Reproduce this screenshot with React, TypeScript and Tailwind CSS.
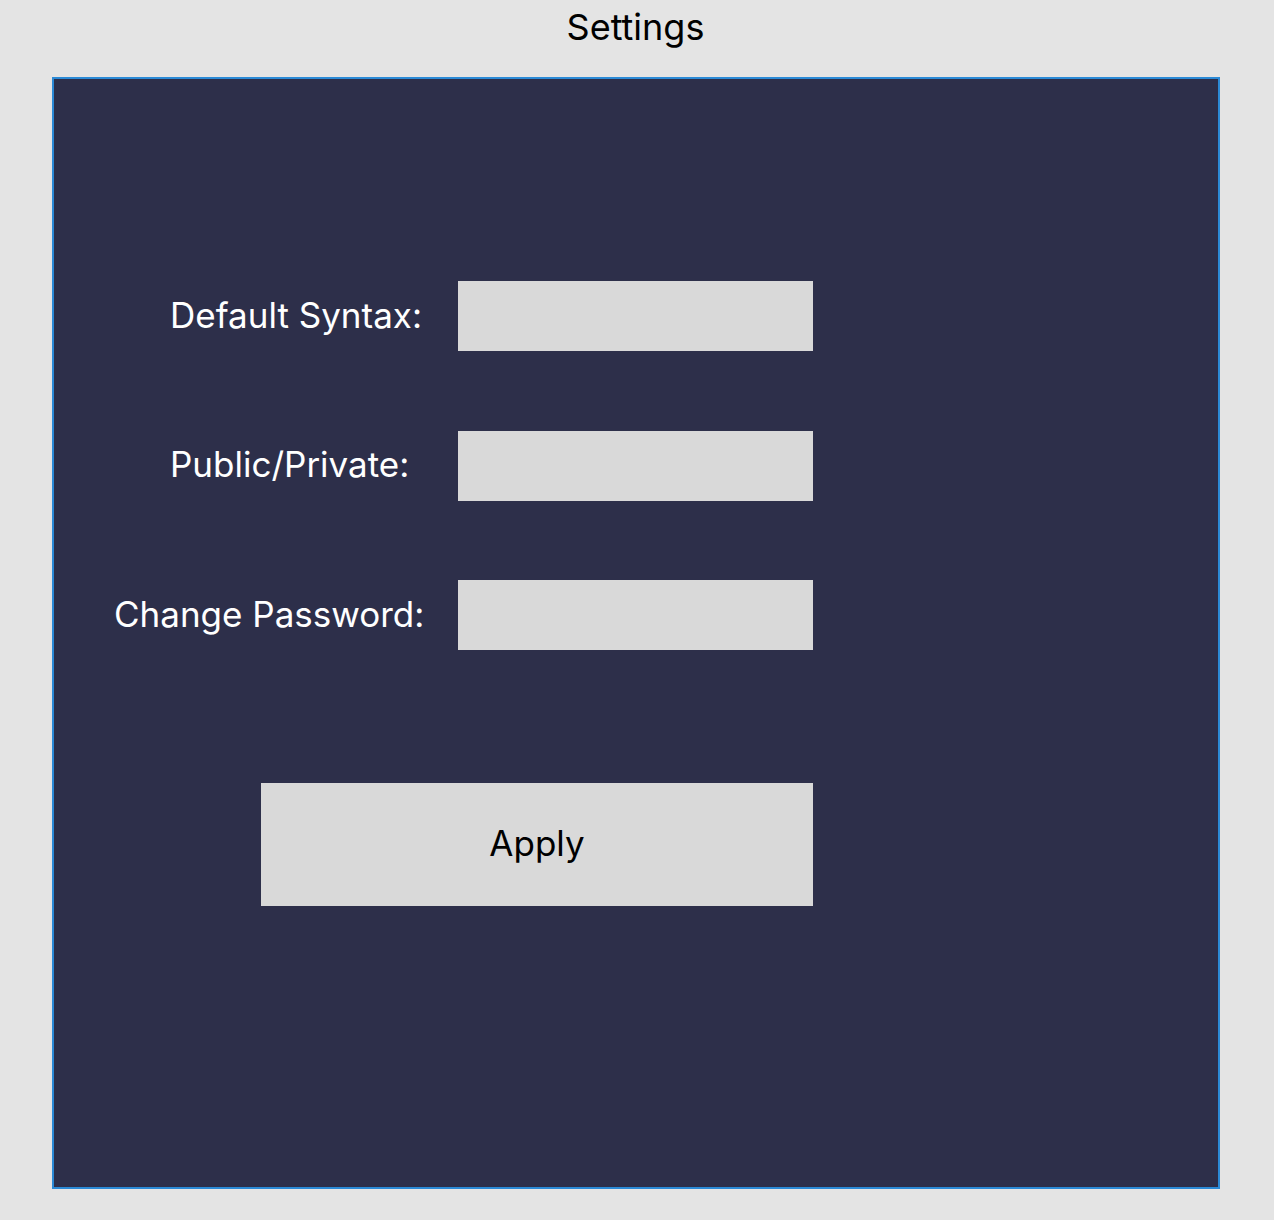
import { useState } from "react"

const FIELDS = [
  { id: "syntax", label: "Default Syntax:", indent: "pl-[116px]" },
  { id: "visibility", label: "Public/Private:", indent: "pl-[116px]" },
  { id: "password", label: "Change Password:", indent: "pl-[60px]" },
]

export default function App() {
  const [values, setValues] = useState<Record<string, string>>({})

  return (
    <div className="min-h-[1220px] bg-[#e4e4e4] font-['Inter',sans-serif]">
      <h1 className="h-[77px] pt-[4px] pr-[3px] text-center text-[36px] leading-[46px] text-black">Settings</h1>
      <main className="ml-[52px] w-[1168px] h-[1112px] border-2 border-[#2b8ad6] bg-[#2d2f4a] pt-[202px]">
        <div className="flex flex-col gap-[79.5px]">
          {FIELDS.map(field => (
            <div key={field.id} className="flex items-center h-[70px]">
              <label htmlFor={field.id} className={`w-[404px] pb-[2px] text-[35px] text-white ${field.indent}`}>
                {field.label}
              </label>
              <input
                id={field.id}
                type={field.id === "password" ? "password" : "text"}
                className="w-[355px] h-[70px] bg-[#d9d9d9] outline-none px-3 text-[24px] text-black"
                value={values[field.id] ?? ""}
                onChange={e => setValues({ ...values, [field.id]: e.target.value })}
              />
            </div>
          ))}
        </div>
        <button className="block mt-[133px] ml-[207px] w-[552px] h-[123px] bg-[#d9d9d9] pb-[2px] text-[35px] text-black">
          Apply
        </button>
      </main>
    </div>
  )
}
